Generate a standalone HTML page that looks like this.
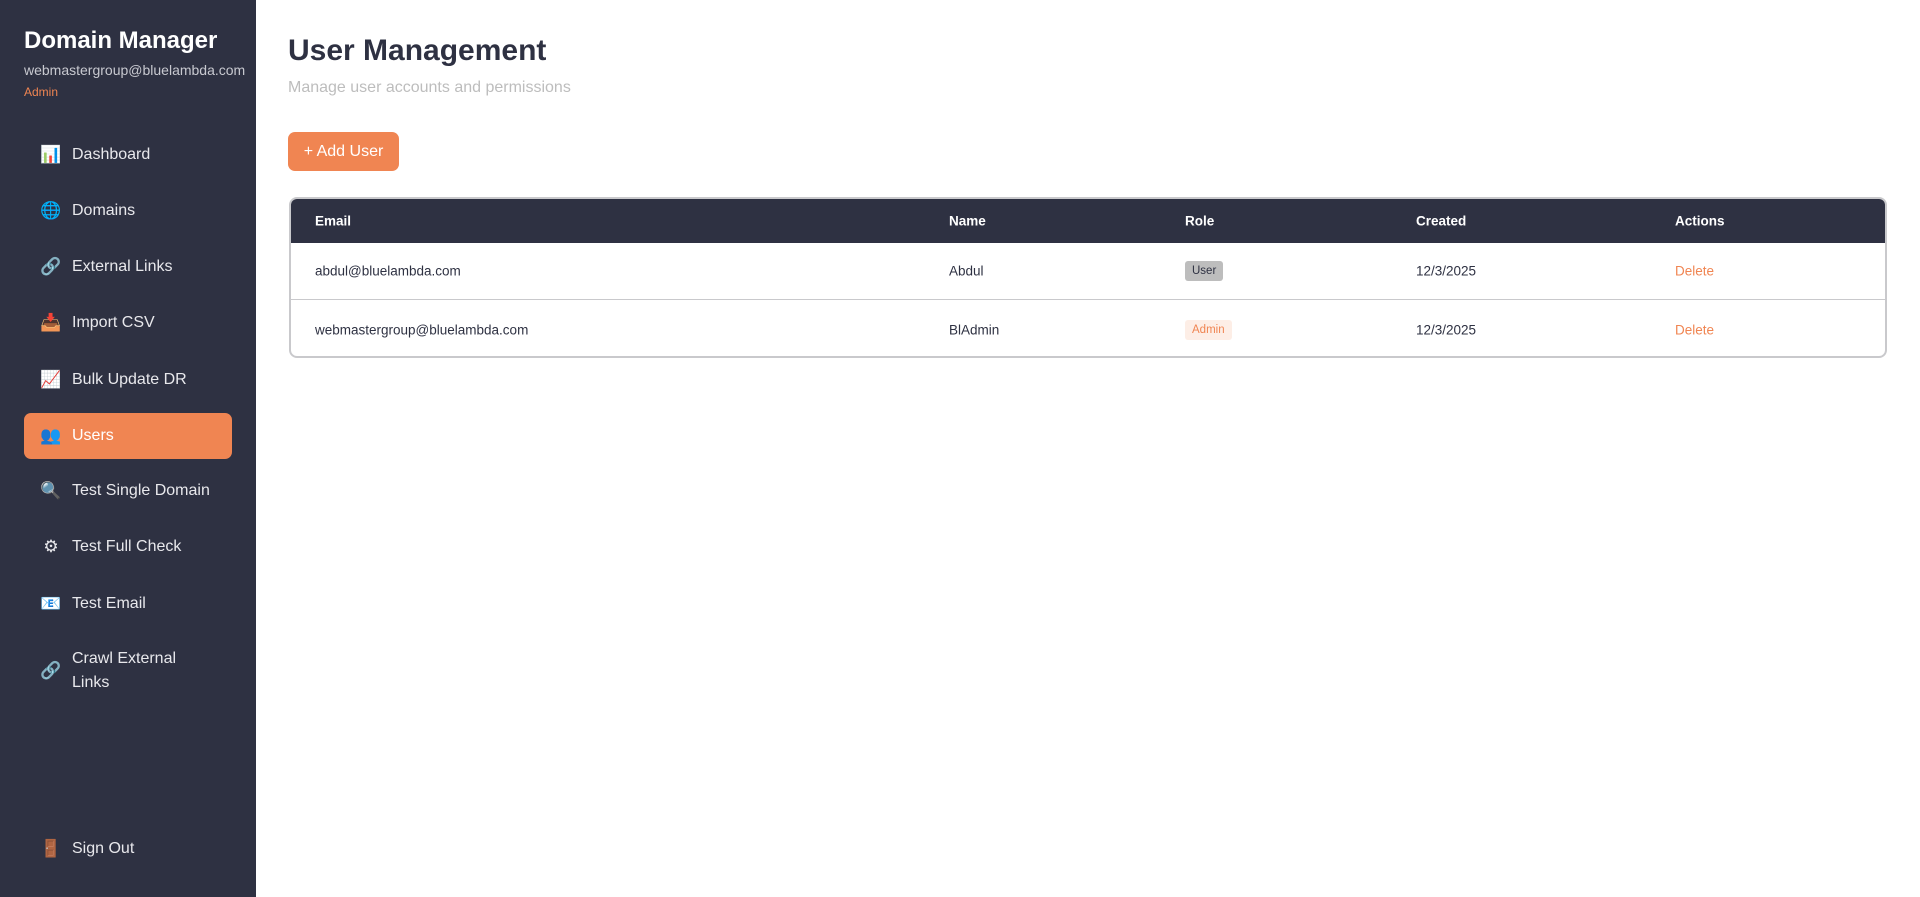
<!DOCTYPE html>
<html><head><meta charset="utf-8"><style>
*{margin:0;padding:0;box-sizing:border-box}
body{width:1920px;height:897px;font-family:"Liberation Sans",sans-serif;background:#fff;position:relative;overflow:hidden}
.sb{position:absolute;left:0;top:0;width:256px;height:897px;background:#2e3142;color:#fff}
.sb h1{position:absolute;left:24px;top:27px;font-size:24px;font-weight:bold;white-space:nowrap}
.sb .em{position:absolute;left:24px;top:62px;font-size:14px;color:#c8c9d0}
.sb .ad{position:absolute;left:24px;top:85px;font-size:12px;color:#f08552}
.nav{position:absolute;left:24px;width:208px;height:46px;border-radius:7px;font-size:16px;color:#e8e8ec;display:flex;align-items:center;padding-left:48px;line-height:24px}
.nav .ic{position:absolute;left:16px;top:50%;transform:translateY(-50%);font-size:17px;font-family:"DejaVu Sans",sans-serif;width:22px;text-align:center}
.nav.on{background:#f08552;color:#fff}
.main{position:absolute;left:288px;top:0}
.t{position:absolute;left:0;top:34px;font-size:30px;font-weight:bold;color:#2e3142;white-space:nowrap}
.st{position:absolute;left:0;top:79px;font-size:16px;color:#bdbdbd;white-space:nowrap}
.btn{position:absolute;left:0;top:132px;width:111px;height:39px;border-radius:7px;background:#f08552;color:#fff;font-size:16px;display:flex;align-items:center;justify-content:center}
.tb{position:absolute;left:289px;top:197px;width:1598px;height:161px;border:2px solid #c9c9cc;border-radius:8px;overflow:hidden;font-size:13.5px;color:#2e3142}
.hd{position:absolute;left:0;top:0;right:0;height:44px;background:#2e3142;color:#fff;font-weight:bold}
.c{position:absolute;top:50%;transform:translateY(-50%);white-space:nowrap}
.r{position:absolute;left:0;right:0;height:57px}
.bd{padding:4px 7px;border-radius:3px;font-size:11.5px}
</style></head><body>
<div class="sb">
<h1>Domain Manager</h1>
<div class="em">webmastergroup@bluelambda.com</div>
<div class="ad">Admin</div>
<div class="nav" style="top:132px"><span class="ic">📊</span>Dashboard</div>
<div class="nav" style="top:188px"><span class="ic">🌐</span>Domains</div>
<div class="nav" style="top:244px"><span class="ic">🔗</span>External Links</div>
<div class="nav" style="top:300px"><span class="ic">📥</span>Import CSV</div>
<div class="nav" style="top:357px"><span class="ic">📈</span>Bulk Update DR</div>
<div class="nav on" style="top:413px"><span class="ic">👥</span>Users</div>
<div class="nav" style="top:468px"><span class="ic">🔍</span>Test Single Domain</div>
<div class="nav" style="top:524px"><span class="ic">⚙</span>Test Full Check</div>
<div class="nav" style="top:581px"><span class="ic">📧</span>Test Email</div>
<div class="nav" style="top:645px;height:52px"><span class="ic">🔗</span>Crawl External<br>Links</div>
<div class="nav" style="top:826px"><span class="ic">🚪</span>Sign Out</div>
</div>
<div class="main">
<div class="t">User Management</div>
<div class="st">Manage user accounts and permissions</div>
<div class="btn">+ Add User</div>
</div>
<div class="tb">
<div class="hd"><span class="c" style="left:24px">Email</span><span class="c" style="left:658px">Name</span><span class="c" style="left:894px">Role</span><span class="c" style="left:1125px">Created</span><span class="c" style="left:1384px">Actions</span></div>
<div class="r" style="top:44px;border-bottom:1px solid #c9c9cc"><span class="c" style="left:24px">abdul@bluelambda.com</span><span class="c" style="left:658px">Abdul</span><span class="c bd" style="left:894px;background:#bdbdbd;color:#2e3142">User</span><span class="c" style="left:1125px">12/3/2025</span><span class="c" style="left:1384px;color:#f08552">Delete</span></div>
<div class="r" style="top:102px"><span class="c" style="left:24px">webmastergroup@bluelambda.com</span><span class="c" style="left:658px">BlAdmin</span><span class="c bd" style="left:894px;background:#fdeee6;color:#f08552">Admin</span><span class="c" style="left:1125px">12/3/2025</span><span class="c" style="left:1384px;color:#f08552">Delete</span></div>
</div>
</body></html>
